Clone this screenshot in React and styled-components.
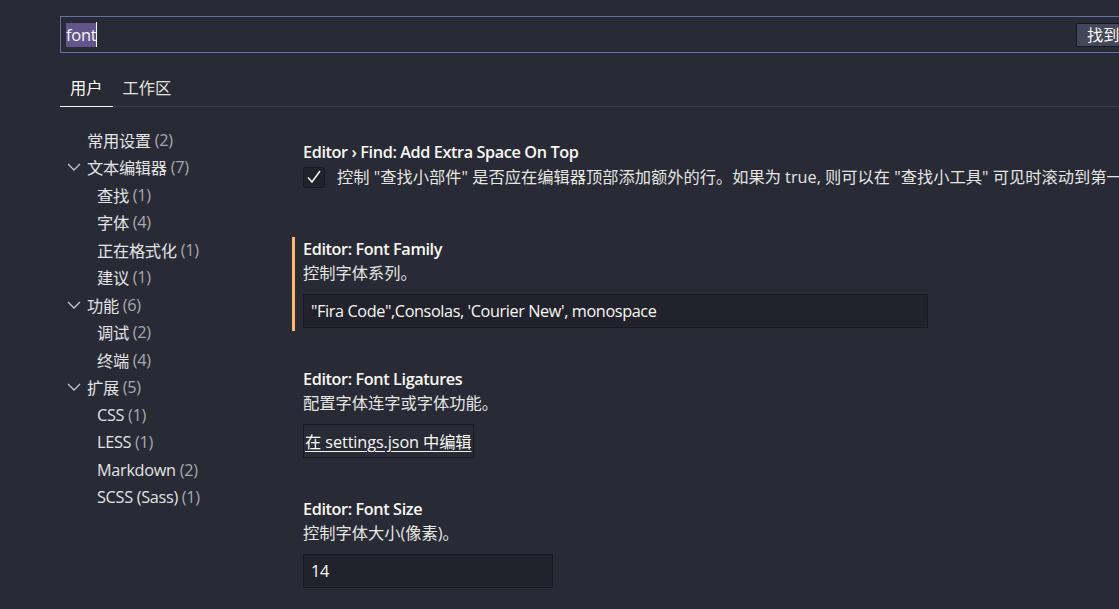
import styled, { createGlobalStyle } from "styled-components";

const GlobalStyle = createGlobalStyle`
  html, body {
    margin: 0;
    background: #282a36;
    overflow: hidden;
  }
  * {
    box-sizing: border-box;
  }
`;

const Page = styled.div`
  width: 1240px;
  padding: 16px 0 0 60px;
  font-family: "Open Sans", "Noto Sans CJK SC", sans-serif;
  font-size: 16.25px;
  color: #f8f8f2;
`;

const SearchBox = styled.div`
  display: grid;
  grid-template-columns: 1004px auto;
  column-gap: 6px;
  align-items: center;
  height: 37px;
  padding: 0 5px;
  border: 1px solid #6272a4;
`;

const Query = styled.div`
  display: flex;
  align-items: center;
  height: 25px;
  font-size: 16.5px;
  letter-spacing: -0.3px;
`;

const Selected = styled.span`
  line-height: 24px;
  background: #62558b;
`;

const Caret = styled.span`
  width: 1px;
  height: 25px;
  background: #f8f8f2;
`;

const CountButton = styled.span`
  height: 24px;
  padding: 0 10px;
  line-height: 22px;
  white-space: nowrap;
  background: #44475a;
  border: 1px solid #191a21;
  border-radius: 2px;
`;

const Tabs = styled.div`
  display: flex;
  margin-top: 23px;
  border-bottom: 1px solid #3e4042;
`;

const Tab = styled.div`
  padding: 0 10px 6px;
  line-height: 24px;
  color: ${(p) => (p.$active ? "#f8f8f2" : "#e2e2de")};
  border-bottom: 1px solid ${(p) => (p.$active ? "#f8f8f2" : "transparent")};
  margin-bottom: -1px;
`;

const Body = styled.div`
  display: flex;
`;

const Toc = styled.nav`
  width: 232px;
  flex: none;
  padding-top: 19px;
  letter-spacing: -0.3px;
`;

const TocRow = styled.div`
  display: flex;
  align-items: center;
  height: 27.5px;
  padding-left: ${(p) => (p.$depth ? 17 : 7)}px;
  white-space: nowrap;
  color: #e4e4e4;
`;

const Twisty = styled.span`
  display: flex;
  align-items: center;
  width: 20px;
  height: 100%;
`;

const Count = styled.span`
  color: #a8a8ae;
`;

const Settings = styled.div`
  flex: 1;
  padding-top: 33px;
`;

const Item = styled.section`
  padding: 0 0 3px 8px;
  margin-bottom: 36px;
  border-left: 3px solid ${(p) => (p.$modified ? "#ffb86c" : "transparent")};
`;

const Title = styled.div`
  line-height: 24px;
  font-weight: 600;
  letter-spacing: -0.4px;
  white-space: nowrap;
`;

const Description = styled.div`
  line-height: 24px;
  color: #e6e6e0;
  white-space: nowrap;
`;

const CheckRow = styled.label`
  display: flex;
  align-items: center;
  gap: 12px;
  height: 26px;
  margin-bottom: 8px;
`;

const Checkbox = styled.span`
  display: flex;
  align-items: center;
  justify-content: center;
  width: 22px;
  height: 21px;
  flex: none;
  background: #21222c;
  border: 1px solid #191a21;
  border-radius: 3px;
`;

const TextInput = styled.div`
  display: flex;
  align-items: center;
  width: ${(p) => p.$width}px;
  height: 34px;
  margin-top: 9px;
  padding: 0 7px;
  background: #21222c;
  border: 1px solid #191a21;
  letter-spacing: -0.4px;
  white-space: nowrap;
`;

const EditLink = styled.a`
  display: inline-flex;
  align-items: center;
  height: 34px;
  margin-top: 9px;
  padding: 0 1px;
  border: 1px solid #191a21;
  color: #f8f8f2;
  text-decoration: underline;
  text-underline-offset: 3px;
  letter-spacing: -0.1px;
  white-space: nowrap;
  cursor: pointer;
`;

const Chevron = () => (
  <svg width="14" height="8" viewBox="0 0 14 8">
    <path d="M1 1 L7 7 L13 1" fill="none" stroke="#c8c8c8" strokeWidth="1.3" />
  </svg>
);

const Check = () => (
  <svg width="18" height="18" viewBox="0 0 18 18">
    <path d="M3 9.5 L7 14 L15 3" fill="none" stroke="#f8f8f2" strokeWidth="1.5" />
  </svg>
);

const toc = [
  { label: "常用设置", count: 2, depth: 0 },
  { label: "文本编辑器", count: 7, depth: 0, open: true },
  { label: "查找", count: 1, depth: 1 },
  { label: "字体", count: 4, depth: 1 },
  { label: "正在格式化", count: 1, depth: 1 },
  { label: "建议", count: 1, depth: 1 },
  { label: "功能", count: 6, depth: 0, open: true },
  { label: "调试", count: 2, depth: 1 },
  { label: "终端", count: 4, depth: 1 },
  { label: "扩展", count: 5, depth: 0, open: true },
  { label: "CSS", count: 1, depth: 1 },
  { label: "LESS", count: 1, depth: 1 },
  { label: "Markdown", count: 2, depth: 1 },
  { label: "SCSS (Sass)", count: 1, depth: 1 },
];

export default function App() {
  return (
    <>
      <GlobalStyle />
      <Page>
        <SearchBox>
          <Query>
            <Selected>font</Selected>
            <Caret />
          </Query>
          <CountButton>找到 33 个设置</CountButton>
        </SearchBox>

        <Tabs>
          <Tab $active>用户</Tab>
          <Tab>工作区</Tab>
        </Tabs>

        <Body>
          <Toc>
            {toc.map((t) => (
              <TocRow key={t.label} $depth={t.depth}>
                <Twisty>{t.open && <Chevron />}</Twisty>
                {t.label}&nbsp;<Count>({t.count})</Count>
              </TocRow>
            ))}
          </Toc>

          <Settings>
            <Item>
              <Title>Editor › Find: Add Extra Space On Top</Title>
              <CheckRow>
                <Checkbox>
                  <Check />
                </Checkbox>
                <Description>
                  控制 "查找小部件" 是否应在编辑器顶部添加额外的行。如果为 true, 则可以在 "查找小工具" 可见时滚动到第一行之上。
                </Description>
              </CheckRow>
            </Item>

            <Item $modified>
              <Title>Editor: Font Family</Title>
              <Description>控制字体系列。</Description>
              <TextInput $width={625}>"Fira Code",Consolas, 'Courier New', monospace</TextInput>
            </Item>

            <Item>
              <Title>Editor: Font Ligatures</Title>
              <Description>配置字体连字或字体功能。</Description>
              <EditLink>在 settings.json 中编辑</EditLink>
            </Item>

            <Item>
              <Title>Editor: Font Size</Title>
              <Description>控制字体大小(像素)。</Description>
              <TextInput $width={250}>14</TextInput>
            </Item>
          </Settings>
        </Body>
      </Page>
    </>
  );
}
